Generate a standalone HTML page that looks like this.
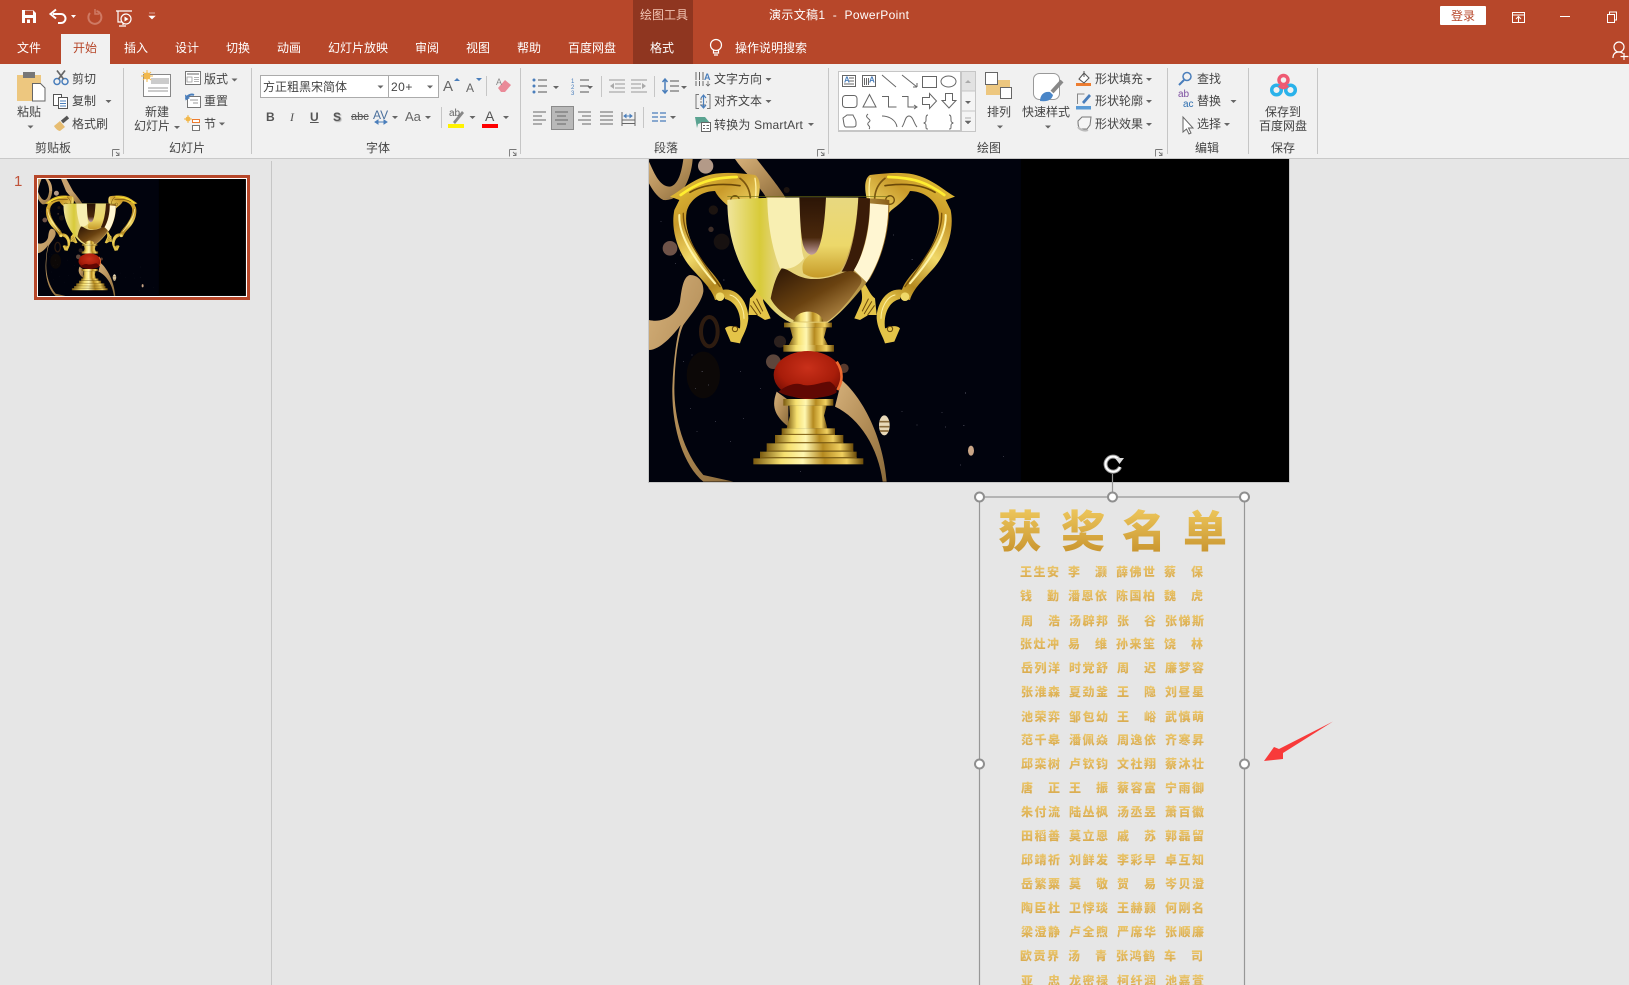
<!DOCTYPE html>
<html lang="zh-CN"><head><meta charset="utf-8"><title>演示文稿1 - PowerPoint</title>
<style>
html,body{margin:0;padding:0;width:1629px;height:985px;overflow:hidden;background:#e6e6e6}
body{position:relative;font-family:"Liberation Sans","Noto Sans CJK SC",sans-serif}
.b{position:absolute}
.t{position:absolute;white-space:nowrap;font-size:12px;line-height:16px;color:#444}
.w{color:#fff}
.g{font-family:"Noto Sans CJK SC",sans-serif;font-weight:900;position:absolute;line-height:50px;font-size:44px;top:503px;color:transparent;background:linear-gradient(#f2cd62,#c9952f);-webkit-background-clip:text;background-clip:text}
.r{position:absolute;left:1021px;width:220px;height:16px;font-family:"Noto Sans CJK SC",sans-serif;font-weight:700;font-size:12px;line-height:16px;white-space:nowrap}
.r.s{left:1020px}
.r b{display:inline-block;width:39px;margin-right:9px;text-align:justify;text-align-last:justify;color:transparent;background:linear-gradient(#eecb70,#d6a548);-webkit-background-clip:text;background-clip:text}
</style></head><body>
<div class="b" style="left:0;top:0;width:1629px;height:64px;background:#b7472a"></div>
<div class="b" style="left:633px;top:0;width:60px;height:64px;background:#8f3620"></div>
<div class="b" style="left:61px;top:34px;width:49px;height:30px;background:#f1f1f1"></div>
<div class="b" style="left:0;top:64px;width:1629px;height:94px;background:#f1f1f1;border-bottom:1px solid #c9c9c9"></div>
<div class="b" style="left:271px;top:161px;width:1px;height:824px;background:#c6c6c6"></div>
<div class="b" style="left:1440px;top:6px;width:46px;height:19px;background:#fff;border-radius:1px"></div>
<div class="b" style="left:260px;top:75px;width:127px;height:21px;background:#fff;border:1px solid #ababab"></div>
<div class="b" style="left:388px;top:75px;width:49px;height:21px;background:#fff;border:1px solid #ababab"></div>
<div class="b" style="left:551px;top:106px;width:21px;height:22px;background:#b9b9b9;border:1px solid #8a8a8a"></div>
<div class="b" style="left:838px;top:71px;width:122px;height:59px;background:#fff;border:1px solid #c6c6c6"></div>
<div class="b" style="left:961px;top:71px;width:13px;height:59px;background:#f4f4f4;border:1px solid #c6c6c6"></div>
<div class="b" style="left:962px;top:72px;width:13px;height:19px;background:#e2e2e2"></div>

<svg class="b" style="left:0;top:0" width="1629" height="985" viewBox="0 0 1629 985" xmlns="http://www.w3.org/2000/svg">
<defs>
<linearGradient id="gh" x1="0" x2="1" y1="0" y2="0"><stop offset="0" stop-color="#7a5a10"/><stop offset=".25" stop-color="#f6e070"/><stop offset=".45" stop-color="#fff7b0"/><stop offset=".65" stop-color="#b58a20"/><stop offset=".85" stop-color="#f0d060"/><stop offset="1" stop-color="#6a4a08"/></linearGradient>
<linearGradient id="gs" gradientUnits="userSpaceOnUse" x1="90" y1="60" x2="350" y2="400"><stop offset="0" stop-color="#e8c838"/><stop offset=".3" stop-color="#c99a2a"/><stop offset=".55" stop-color="#f0d868"/><stop offset=".8" stop-color="#b58a20"/><stop offset="1" stop-color="#e4c448"/></linearGradient>
<linearGradient id="rb" x1="0" x2="1" y1="0" y2="1"><stop offset="0" stop-color="#d5b07a"/><stop offset=".5" stop-color="#b38e58"/><stop offset="1" stop-color="#8a6a3a"/></linearGradient>
<linearGradient id="cup" x1="0" x2="1" y1="0" y2="0"><stop offset="0" stop-color="#f0e59c"/><stop offset=".2" stop-color="#d8cb3a"/><stop offset=".3" stop-color="#e4d478"/><stop offset=".6" stop-color="#e8d27a"/><stop offset="1" stop-color="#8a5e18"/></linearGradient>
<linearGradient id="dk" x1="0" x2="0" y1="0" y2="1"><stop offset="0" stop-color="#2c1506"/><stop offset=".7" stop-color="#4a280c"/><stop offset="1" stop-color="#c39ea0"/></linearGradient>
<linearGradient id="bot" x1="0" x2="1" y1="0" y2="1"><stop offset="0" stop-color="#2a1405"/><stop offset=".5" stop-color="#6a4210"/><stop offset="1" stop-color="#cda35a"/></linearGradient>
<linearGradient id="ct" x1="0" x2="0" y1="0" y2="1"><stop offset="0" stop-color="#e8d880"/><stop offset=".6" stop-color="#ecd86a"/><stop offset="1" stop-color="#c69a28"/></linearGradient>
<radialGradient id="ball" cx=".5" cy=".35" r=".7"><stop offset="0" stop-color="#c9301a"/><stop offset=".6" stop-color="#a81d0a"/><stop offset="1" stop-color="#6a0a02"/></radialGradient>
<clipPath id="sc"><rect x="27" y="-99" width="1920" height="1080"/></clipPath>
<clipPath id="mc"><rect x="649" y="159" width="640" height="323"/></clipPath>
<g id="hd">
<path d="M90 125C125 105 160 70 215 58C260 50 300 55 345 60C362 70 362 100 355 130C350 165 340 195 332 218L312 218C305 195 295 180 280 165C260 150 235 130 225 108C190 108 150 130 140 170C130 230 165 290 205 340C230 370 255 395 252 430L225 435C215 400 185 375 150 335C110 285 92 220 103 165L118 135Z" fill="url(#gs)"/>
<path d="M245 405C290 395 325 440 325 490C322 525 305 545 300 565L272 560L255 520C270 505 295 520 300 520C305 480 290 440 255 432Z" fill="url(#gs)"/>
<path d="M330 430C345 420 350 400 372 368L380 375C370 400 365 430 372 445L392 490L375 495L350 480L325 480Z" fill="url(#gs)"/>
<g fill="none" stroke-linecap="round">
<path d="M118 180C115 240 160 310 225 385" stroke="#fff4a8" stroke-width="6"/>
<path d="M130 175C128 240 172 300 240 395" stroke="#7a5208" stroke-width="4"/>
<path d="M122 120C170 85 210 68 290 66" stroke="#ffee30" stroke-width="8"/>
<path d="M150 112C190 88 240 84 300 92" stroke="#6a4808" stroke-width="5"/>
<path d="M300 70C340 100 335 150 322 195" stroke="#7a5610" stroke-width="5"/>
<path d="M345 70C352 110 345 150 335 185" stroke="#fff0a0" stroke-width="4"/>
<circle cx="285" cy="135" r="13" stroke="#6e4c0c" stroke-width="4"/>
<path d="M340 440l22 36M350 432l18 36M332 452l20 28" stroke="#6e4c0c" stroke-width="3"/>
<path d="M270 420C295 425 312 460 312 490" stroke="#fff0a0" stroke-width="3"/>
<circle cx="285" cy="522" r="8" stroke="#6e4c0c" stroke-width="3"/>
</g>
<circle cx="322" cy="210" r="8" fill="#fff0a8"/>
<circle cx="240" cy="425" r="13" fill="#f0d868"/>
</g>
<g id="slide"><g clip-path="url(#sc)">
<rect x="27" y="-99" width="1920" height="1080" fill="#000"/>
<rect x="27" y="-99" width="1116" height="1080" fill="#01030d"/>
<circle cx="197" cy="33" r="23" fill="#b39a88"/><circle cx="90" cy="280" r="22" fill="#6f5348"/><circle cx="213" cy="223" r="8" fill="#3e2e28"/><circle cx="214" cy="397" r="9" fill="#5e4538"/><circle cx="400" cy="620" r="22" fill="#5c463c"/><circle cx="612" cy="640" r="14" fill="#57392c"/><circle cx="420" cy="560" r="18" fill="#2c211e"/><circle cx="245" cy="260" r="24" fill="#171110"/><circle cx="220" cy="165" r="14" fill="#1c1410"/><circle cx="440" cy="105" r="9" fill="#1c1410"/>
<ellipse cx="208" cy="530" rx="25" ry="44" fill="none" stroke="#2e1c10" stroke-width="12"/>
<ellipse cx="190" cy="660" rx="50" ry="70" fill="#0c0807"/>
<path d="M27 20C45 60 60 95 90 95C115 90 125 50 130 12L158 12C155 60 130 140 70 135C50 125 35 100 27 85Z" fill="url(#rb)"/>
<path d="M130 12L158 12C160 -30 150 -70 120 -99L95 -99C120 -60 130 -20 130 12ZM27 -99L60 -99C45 -60 30 -20 27 20Z" fill="#c9a26e"/>
<path d="M285 12L350 12C380 50 420 100 438 130L380 130C350 80 310 50 285 12Z" fill="url(#rb)"/>
<path d="M240 -99L290 -99L350 12L285 12Z" fill="#c9a26e"/>
<path d="M27 495C70 505 110 480 120 440C125 400 130 365 150 360C175 360 192 380 190 410C185 440 160 470 130 510C115 540 105 610 103 700C103 790 130 890 190 960L280 980L190 980C130 930 95 820 97 700C100 620 110 540 122 510C100 540 60 585 27 585Z" fill="url(#rb)"/>
<path d="M605 675C670 730 730 850 740 980L728 980C715 880 660 790 585 755Z" fill="url(#rb)"/>
<path d="M410 710C395 750 400 780 445 815L445 735Z" fill="url(#rb)"/>
<ellipse cx="733" cy="811" rx="16" ry="30" fill="#e8d9b8"/><path d="M718 800h30M718 815h30M720 828h26" stroke="#8a6c3c" stroke-width="5"/>
<ellipse cx="993" cy="887" rx="9" ry="15" fill="#c9a586"/>
<path d="M120 300h2M105 325h2M62 200h2M80 130h2M185 650h3M250 375h3M165 700h2M300 650h2M205 690h2M150 760h2M170 830h2M225 800h2M270 860h2M310 790h2M975 714h3M905 772h2M970 812h3M915 816h2M1090 905h2M960 930h2M815 313h3M760 240h2M785 770h2M830 810h2M430 920h2M480 950h2M360 700h2M130 620h2M155 600h2" stroke="#778" stroke-width="2"/>
<use href="#hd"/>
<use href="#hd" transform="translate(1035 0) scale(-1 1)"/>
<path d="M262 135C262 260 300 360 385 450C410 480 440 500 460 505L560 505C600 480 650 420 690 370C730 300 750 220 748 135C700 125 320 125 262 135Z" fill="url(#cup)"/>
<path d="M382 128L480 128C482 200 480 280 492 310C470 340 440 345 420 340C395 280 382 200 382 128Z" fill="#f8efb2"/>
<path d="M555 128L655 128C650 220 630 300 600 350C560 370 520 375 490 355C480 320 500 300 530 290C550 260 555 180 555 128Z" fill="url(#ct)"/>
<path d="M478 128L558 128C555 180 550 260 530 290C515 310 495 295 488 265C480 220 480 170 478 128Z" fill="url(#dk)"/>
<path d="M655 128L690 130C690 220 670 300 640 350L605 350C635 300 650 220 655 128Z" fill="#3a1c08"/>
<path d="M690 145L745 150C745 240 720 320 680 382L642 345C670 300 690 230 690 145Z" fill="#fff6d2"/>
<path d="M425 340C450 340 470 375 530 372C590 370 620 340 640 350C665 365 670 375 660 390C620 450 580 490 560 500L470 500C430 480 400 450 392 430C400 390 410 360 425 340Z" fill="url(#bot)"/>
<path d="M262 125L748 125" stroke="#6a6a10" stroke-width="2"/>
<path d="M432 503h144v14H432z" fill="url(#gh)"/><path d="M460 500c10-40 80-40 90 0z" fill="url(#gh)"/>
<path d="M450 517h110l-8 30 12 24H446l12-24z" fill="url(#gh)"/>
<rect x="430" y="570" width="152" height="20" fill="url(#gh)"/>
<ellipse cx="503" cy="660" rx="102" ry="72" fill="url(#ball)"/>
<path d="M415 710C440 690 470 680 490 690C520 695 545 680 570 680C585 690 590 700 590 712C560 735 450 735 415 710Z" fill="#600803"/>
<path d="M590 620C610 650 608 680 592 705" stroke="#ee6a30" stroke-width="8" fill="none"/>
<rect x="430" y="732" width="150" height="20" fill="url(#gh)"/>
<path d="M448 752h112l-8 30 10 38H440l10-38z" fill="url(#gh)"/>
<rect x="425" y="820" width="160" height="20" fill="url(#gh)"/><rect x="405" y="840" width="205" height="25" fill="url(#gh)"/><rect x="380" y="865" width="260" height="25" fill="url(#gh)"/><rect x="360" y="890" width="290" height="20" fill="url(#gh)"/><rect x="340" y="910" width="330" height="18" fill="url(#gh)"/>
<path d="M425 838h160M405 863h205M380 888h260M360 908h290" stroke="#7a5a10" stroke-width="3"/>
</g></g>
</defs>

<!-- slide -->
<rect x="648" y="158" width="642" height="325" fill="#c8c8c8"/>
<g clip-path="url(#mc)"><use href="#slide" transform="translate(640 155) scale(.33333)"/></g>
<!-- thumb -->
<rect x="35.500" y="176.500" width="213" height="122" fill="#fff" stroke="#b7472a" stroke-width="3"/>
<use href="#slide" transform="translate(35.080 189.720) scale(.1083)"/>

<!-- selection -->
<path d="M979.500 985V497H1244.500V985M1112.500 474V497" fill="none" stroke="#979797" stroke-width="1.200"/>
<g fill="#fff" stroke="#8f8f8f" stroke-width="2"><circle cx="979.500" cy="497" r="4.500"/><circle cx="1112.500" cy="497" r="4.500"/><circle cx="1244.500" cy="497" r="4.500"/><circle cx="979.500" cy="764" r="4.500"/><circle cx="1244.500" cy="764" r="4.500"/></g>
<path d="M1118.500 459A7.500 7.500 0 1 0 1120 467" fill="none" stroke="#9a9a9a" stroke-width="4"/>
<path d="M1118.500 459A7.500 7.500 0 1 0 1120 467" fill="none" stroke="#fff" stroke-width="2"/>
<path d="M1116 464h9l-4.500 -6z" fill="#ddd" transform="rotate(180 1120 461)"/>
<polygon points="1333,721.500 1283,753 1283,759 1264,761 1274,747 1279,749" fill="#f83a3a"/>

<!-- QAT -->
<path d="M22 10h11l3 3v10H22z" fill="#fff"/><rect x="25" y="10.500" width="8" height="4.500" fill="#b7472a"/><rect x="25" y="18" width="8" height="5" fill="#b7472a"/><rect x="27" y="19.500" width="3" height="3.500" fill="#fff"/>
<path d="M53 14h8a4.500 4.500 0 0 1 0 9h-3" fill="none" stroke="#fff" stroke-width="2"/><path d="M56 9.500l-5.500 4.500 5.500 4.500" fill="none" stroke="#fff" stroke-width="2"/>
<path d="M71 15h5l-2.500 3z" fill="#fff"/>
<path d="M96.500 11A6.500 6.500 0 1 1 90 13" fill="none" stroke="#cf7a64" stroke-width="2"/><path d="M95 9v5h4" fill="none" stroke="#cf7a64" stroke-width="1.500"/>
<path d="M116 11h16M118 11v11h4M123 22v3M119 26h7" fill="none" stroke="#fff" stroke-width="1.200"/><circle cx="126" cy="19" r="5" fill="#b7472a" stroke="#fff" stroke-width="1.200"/><path d="M124.500 16.500l4 2.500-4 2.500z" fill="#fff"/>
<path d="M149 13h6M149 16h6l-3 3z" fill="#fff" stroke="#fff" stroke-width=".6"/>
<!-- window -->
<path d="M1512.500 12.500h12v10h-12zM1512.500 15h12M1518.500 22v-5M1516 19l2.500-2.500 2.500 2.500" fill="none" stroke="#fff"/>
<path d="M1560 16.500h10" stroke="#fff"/>
<path d="M1607.500 14.500h7v8h-7zM1609.500 14.500v-2.500h7v8h-2" fill="none" stroke="#fff"/>
<circle cx="1619" cy="47" r="5" fill="none" stroke="#fff" stroke-width="1.200"/><path d="M1613 58c0-4 2-6 6-6 2 0 3 .5 4 1.500M1624 53v7M1620.500 56.500h8" fill="none" stroke="#fff" stroke-width="1.200"/>
<circle cx="716" cy="45" r="5.500" fill="none" stroke="#fff" stroke-width="1.200"/><path d="M713.500 50v3h5v-3M714 55h4" fill="none" stroke="#fff" stroke-width="1.200"/>

<!-- separators -->
<path d="M123.500 68v86M251.500 68v86M520.500 68v86M828.500 68v86M1167.500 68v86M1248.500 68v86M1317.500 68v86M486.500 76v20M441.500 107v21M601.500 76v21M654.500 76v21M643.500 107v21" stroke="#c6c6c6"/>

<!-- clipboard group -->
<rect x="17" y="75" width="24" height="26" fill="#edc77f"/><rect x="23" y="72" width="12" height="6" fill="#777"/><path d="M32.500 83.500h8l4.500 4.500v13H32.500z" fill="#fff" stroke="#666"/>
<circle cx="57" cy="81.500" r="3" fill="none" stroke="#4a7ebb" stroke-width="1.500"/><circle cx="65" cy="81.500" r="3" fill="none" stroke="#4a7ebb" stroke-width="1.500"/><path d="M58.500 79L65 70.500M63.500 79L57 70.500" stroke="#666" stroke-width="1.700"/>
<rect x="53.500" y="94.500" width="8" height="11" fill="#fff" stroke="#555"/><rect x="58.500" y="97.500" width="9" height="11" fill="#fff" stroke="#555"/><path d="M60 101h6M60 103.500h6M60 106h6" stroke="#4a7ebb"/>
<path d="M54 126l6-5 5 6-5 4c-2 0-5-3-6-5z" fill="#e7bd72"/><path d="M62 122l6-5" stroke="#555" stroke-width="3.500"/>
<!-- slides group -->
<rect x="143.500" y="74.500" width="27" height="22" fill="#fff" stroke="#888"/><rect x="151" y="78" width="18" height="6" fill="#ccc"/><path d="M148 88h20M148 91h20" stroke="#999"/><circle cx="147" cy="76" r="3.500" fill="#f2b84b"/><path d="M147 70v12M141 76h12M143 72l8 8M151 72l-8 8" stroke="#f2b84b"/>
<rect x="185.500" y="71.500" width="15" height="13" fill="#fff" stroke="#777"/><path d="M187 74h12" stroke="#999" stroke-width="1.500"/><path d="M187 77h5v5h-5zM194 77.500h5M194 79.500h5M194 81.500h5" fill="none" stroke="#999" stroke-width=".8"/>
<rect x="187.500" y="96.500" width="13" height="11" fill="#fff" stroke="#777"/><path d="M190 100h8M193 103h5" stroke="#999"/><path d="M186 99a6 6 0 0 1 8-4" fill="none" stroke="#4a7ebb" stroke-width="2"/><path d="M185 94.500l.5 6 4.500-2.500z" fill="#4a7ebb"/>
<circle cx="188" cy="119" r="2.500" fill="#f2b84b"/><path d="M188 115v8M184 119h8" stroke="#f2b84b"/><path d="M192.500 119.500h7v3h-7z" fill="#fff" stroke="#ed7d31"/><path d="M192.500 125.500h7v5h-7z" fill="#fff" stroke="#777"/>
<!-- font group misc -->
<path d="M454 81l3-3 3 3z M476 78l3 3 3-3z" fill="#4a7ebb"/>
<path d="M498 88l7-8 6 5-6 7h-4z" fill="#ea8a98"/><text x="496" y="85" font-size="9" fill="#888" font-family="Liberation Sans">A</text>
<path d="M375 122h12M375 122l3-2v4zM387 122l-3-2v4z" fill="#4a7ebb" stroke="#4a7ebb"/>
<path d="M453 122l9-11 2 2-9 11z" fill="#888"/><rect x="448" y="124" width="16" height="4" fill="#fff200"/>
<rect x="482" y="124" width="16" height="4" fill="#f00"/>
<!-- para icons -->
<g fill="#4a7ebb"><circle cx="534" cy="80" r="1.500"/><circle cx="534" cy="86" r="1.500"/><circle cx="534" cy="92" r="1.500"/></g>
<path d="M538 80h9M538 86h9M538 92h9M580 80h9M580 86h9M580 92h9" stroke="#555"/>
<path d="M609 80h16M615 84h10M615 88h10M609 92h16M631 80h16M631 84h10M631 88h10M631 92h16" stroke="#999"/><path d="M614 83l-4 3 4 3zM642 83l4 3-4 3z" fill="#aaa"/>
<path d="M665 80v12M662.500 82l2.500-3 2.500 3M662.500 90l2.500 3 2.500-3" fill="none" stroke="#4a7ebb" stroke-width="1.500"/><path d="M670 81h9M670 86h9M670 91h9" stroke="#555"/>
<text x="571" y="83" font-size="6" fill="#4a7ebb" font-family="Liberation Sans">1</text><text x="571" y="89" font-size="6" fill="#4a7ebb" font-family="Liberation Sans">2</text><text x="571" y="95" font-size="6" fill="#4a7ebb" font-family="Liberation Sans">3</text>
<path d="M533 112h13M533 116h9M533 120h13M533 124h9M555 112h13M557 116h9M555 120h13M557 124h9M578 112h13M582 116h9M578 120h13M582 124h9M600 112h13M600 116h13M600 120h13M600 124h13M622 112v14M635 112v14M622.500 120h12M622.500 123.500h12" fill="none" stroke="#666"/>
<path d="M624 116h8M624 116l2-1.500v3zM632 116l-2-1.500v3z" stroke="#4a7ebb" fill="#4a7ebb"/>
<path d="M652 113h6M652 117h6M652 121h6M660 113h6M660 117h6M660 121h6" stroke="#4a7ebb" stroke-width="1.300"/>
<path d="M696 72v14M699.500 72v14M703 72v14" stroke="#666" stroke-dasharray="8 1"/><text x="704" y="80" font-size="9" font-weight="700" fill="#4a7ebb" font-family="Liberation Sans">A</text><path d="M708 81v5M706 84l2 2 2-2" fill="none" stroke="#666" stroke-width=".8"/>
<path d="M699 94.500h-3v14h3M707 94.500h3v14h-3M700 99h2M700 102h2M706 102h1M700 105h6" fill="none" stroke="#777"/><path d="M703.500 95.500v12M701 98l2.500-3 2.500 3M701 105l2.500 3 2.500-3" fill="none" stroke="#4a7ebb" stroke-width="1.200"/>
<path d="M695 117h10l5 6H701l-3 1-1 4z" fill="#5aa391"/><rect x="701.500" y="122.500" width="9" height="9" fill="#fff" stroke="#666"/><path d="M703 125.500h2M706.500 125.500h2.500M703 128.500h2M706.500 128.500h2.500" stroke="#666"/>
<!-- gallery -->
<g fill="none" stroke="#666" stroke-width="1">
<rect x="842.500" y="75.500" width="13" height="11"/><rect x="862.500" y="75.500" width="13" height="11"/>
<path d="M849 78h5M849 81h5M844 84h10M864.500 78v7M866.500 78v7M868.500 78v7"/>
<path d="M882 75l14 12M902 75l15 12M917 87v-4M917 87h-4"/>
<rect x="922.500" y="76.500" width="14" height="11"/><ellipse cx="948.500" cy="81.500" rx="7.500" ry="5.500"/>
<rect x="842.500" y="95.500" width="14.500" height="12" rx="3"/><path d="M869.500 94.500l6.500 12.500h-13zM882 96.500h6.500v10.500h8M902 96.500h6v10.500h8M914 105l3 2-3 2"/>
<path d="M922.500 97.500h7v-4l7 7.500-7 7.500v-4h-7zM945.500 93.500h7v7h3.500l-7 7.500-7-7.500h3.500z"/>
<path d="M843 118l4-3h6c1 3 3 4 3 7v3c0 2-2 2-3 2h-7c-2 0-2-3-3-9zM868 114c-5 4 5 5 1 8s3 4 0 7M882 116c7 0 14 4 15 11M902 127c3-4 3-11 7-11s5 8 8 11M928 115c-2 0-2 2-2 5s-1 2-2 3c1 1 2 0 2 3s0 3 2 3M949 115c2 0 2 2 2 5s1 2 2 3c-1 1-2 0-2 3s0 3-2 3"/>
</g>
<text x="844" y="82.500" font-size="8" font-weight="700" fill="#4a7ebb" font-family="Liberation Sans">A</text><text x="869" y="82.500" font-size="8" font-weight="700" fill="#4a7ebb" font-family="Liberation Sans">A</text>
<rect x="838.500" y="71.500" width="122" height="59" fill="none" stroke="#c6c6c6"/>
<path d="M961 91h14M961 111h14" stroke="#c6c6c6"/>
<path d="M965 83l3-3 3 3z" fill="#aaa"/><path d="M965 101h6l-3 3z" fill="#666"/><path d="M965 118h6M965 121h6l-3 3z" fill="#666" stroke="#666" stroke-width=".5"/>
<!-- arrange -->
<rect x="986" y="80" width="24" height="15" fill="#edc77f"/><rect x="985.500" y="72.500" width="12" height="12" fill="#fff" stroke="#666"/><rect x="1000.500" y="87.500" width="11" height="11" fill="#fff" stroke="#666"/>
<!-- quick styles -->
<rect x="1033.500" y="73.500" width="26" height="26" rx="6" fill="#fff" stroke="#999"/><path d="M1062 81l-10 11" stroke="#888" stroke-width="4"/><path d="M1040 101c0-6 4-10 10-9l3 3c-1 4-4 7-13 6z" fill="#4a86c8"/>
<!-- shape fmt -->
<rect x="1076" y="83" width="15" height="3" fill="#ed7d31"/><path d="M1079 79l5-6 5 5-5 5z" fill="#fff" stroke="#555"/><path d="M1084 71v6" stroke="#555"/>
<rect x="1076" y="106" width="15" height="3.500" fill="#5b9bd5"/><path d="M1077.500 104v-10h7" fill="none" stroke="#888"/><path d="M1082 102l7-8 2 2-7 8z" fill="#4a7ebb"/>
<path d="M1078 121l4-4h9l-1 8-3 4h-7c-2-2-2-5-2-8z" fill="#f6f6f6" stroke="#777"/><path d="M1078 127c3 4 8 4 10 3" stroke="#bbb" stroke-width="2" fill="none"/>
<!-- launchers -->
<g fill="none" stroke="#777" stroke-width=".9"><path d="M112.500 149.500h7M112.500 149.500v7M116 152l3 3M119 152.500v3h-3"/><path d="M509.500 149.500h7M509.500 149.500v7M513 152l3 3M516 152.500v3h-3"/><path d="M817.500 149.500h7M817.500 149.500v7M821 152l3 3M824 152.500v3h-3"/><path d="M1155.500 149.500h7M1155.500 149.500v7M1159 152l3 3M1162 152.500v3h-3"/></g>
<!-- edit -->
<circle cx="1187" cy="76.500" r="4" fill="none" stroke="#4a7ebb" stroke-width="1.500"/><path d="M1184 80l-5 5" stroke="#4a7ebb" stroke-width="2"/>
<path d="M1183 117v15l3.500-3 2.500 5 2-1-2.500-5h4.500z" fill="#fff" stroke="#666"/>
<!-- baidu -->
<g fill="none" stroke-width="3.500"><circle cx="1283.500" cy="80" r="4.500" stroke="#ef5a72"/><circle cx="1276.500" cy="90" r="4.800" stroke="#2ab2ea"/><circle cx="1290.500" cy="90" r="4.800" stroke="#2ab2ea"/></g><path d="M1279 85.500c3 3 6 3 9 0" fill="none" stroke="#ef5a72" stroke-width="3"/>
<!-- dropdown arrows -->
<path fill="#666" d="M27.500 125.500h6l-3 3zM105.500 100h6l-3 3zM174 126h6l-3 3zM231.500 78.500h6l-3 3zM219 122.500h6l-3 3zM377.500 85.500h6l-3 3zM427 85.500h6l-3 3zM392 116h6l-3 3zM425 116h6l-3 3zM469.500 116h6l-3 3zM503 116h6l-3 3zM553 86h6l-3 3zM587 86h6l-3 3zM681 86h6l-3 3zM670 116h6l-3 3zM765.500 78h6l-3 3zM765.500 100h6l-3 3zM808 123h6l-3 3zM997 125.500h6l-3 3zM1045 125.500h6l-3 3zM1146 78h6l-3 3zM1146 100h6l-3 3zM1146 123h6l-3 3zM1230.500 100h6l-3 3zM1224 123h6l-3 3z"/>
</svg>

<!-- title bar text -->
<div class="t" style="left:640px;top:7px;color:#f2c5b5">绘图工具</div>
<div class="t w" style="left:769px;top:7px;letter-spacing:.35px">演示文稿1&nbsp; -&nbsp; PowerPoint</div>
<div class="t" style="left:1451px;top:8px;color:#b7472a">登录</div>
<!-- tabs -->
<div class="t w" style="left:17px;top:40px">文件</div>
<div class="t" style="left:73px;top:40px;color:#b7472a">开始</div>
<div class="t w" style="left:124px;top:40px">插入</div>
<div class="t w" style="left:175px;top:40px">设计</div>
<div class="t w" style="left:226px;top:40px">切换</div>
<div class="t w" style="left:277px;top:40px">动画</div>
<div class="t w" style="left:328px;top:40px">幻灯片放映</div>
<div class="t w" style="left:415px;top:40px">审阅</div>
<div class="t w" style="left:466px;top:40px">视图</div>
<div class="t w" style="left:517px;top:40px">帮助</div>
<div class="t w" style="left:568px;top:40px">百度网盘</div>
<div class="t w" style="left:650px;top:40px">格式</div>
<div class="t w" style="left:735px;top:40px">操作说明搜索</div>
<!-- ribbon text -->
<div class="t" style="left:17px;top:104px">粘贴</div>
<div class="t" style="left:72px;top:71px">剪切</div>
<div class="t" style="left:72px;top:93px">复制</div>
<div class="t" style="left:72px;top:116px">格式刷</div>
<div class="t" style="left:145px;top:104px">新建</div>
<div class="t" style="left:134px;top:118px">幻灯片</div>
<div class="t" style="left:204px;top:71px">版式</div>
<div class="t" style="left:204px;top:93px">重置</div>
<div class="t" style="left:204px;top:116px">节</div>
<div class="t" style="left:263px;top:79px">方正粗黑宋简体</div>
<div class="t" style="left:391px;top:79px;letter-spacing:.5px">20+</div>
<div class="t" style="left:443px;top:79px;font-size:15px;color:#666">A</div>
<div class="t" style="left:466px;top:80px;font-size:12px;color:#666">A</div>
<div class="t" style="left:266px;top:109px;font-weight:700;color:#555">B</div>
<div class="t" style="left:290px;top:109px;font-style:italic;font-family:'Liberation Serif',serif;color:#555">I</div>
<div class="t" style="left:310px;top:109px;font-weight:700;text-decoration:underline;color:#555">U</div>
<div class="t" style="left:333px;top:109px;font-weight:700;color:#555;text-shadow:1px 1px 1px #aaa">S</div>
<div class="t" style="left:351px;top:109px;font-size:11px;text-decoration:line-through;color:#555">abc</div>
<div class="t" style="left:373px;top:107px;font-size:12px;color:#4a6f9c">AV</div>
<div class="t" style="left:405px;top:109px;font-size:13px;color:#666">Aa</div>
<div class="t" style="left:449px;top:106px;font-size:10px;color:#666">ab</div>
<div class="t" style="left:485px;top:108px;font-size:14px;color:#555">A</div>
<div class="t" style="left:714px;top:71px">文字方向</div>
<div class="t" style="left:714px;top:93px">对齐文本</div>
<div class="t" style="left:714px;top:117px;letter-spacing:.2px">转换为 SmartArt</div>
<div class="t" style="left:987px;top:104px">排列</div>
<div class="t" style="left:1022px;top:104px">快速样式</div>
<div class="t" style="left:1095px;top:71px">形状填充</div>
<div class="t" style="left:1095px;top:93px">形状轮廓</div>
<div class="t" style="left:1095px;top:116px">形状效果</div>
<div class="t" style="left:1197px;top:71px">查找</div>
<div class="t" style="left:1197px;top:93px">替换</div>
<div class="t" style="left:1197px;top:116px">选择</div>
<div class="t" style="left:1178px;top:90px;font-size:10px;line-height:10px;color:#7d4fa0">ab</div>
<div class="t" style="left:1183px;top:100px;font-size:10px;line-height:10px;color:#2f6fb0">ac</div>
<div class="t" style="left:1265px;top:104px">保存到</div>
<div class="t" style="left:1259px;top:118px">百度网盘</div>
<div class="t" style="left:35px;top:140px">剪贴板</div>
<div class="t" style="left:169px;top:140px">幻灯片</div>
<div class="t" style="left:366px;top:140px">字体</div>
<div class="t" style="left:654px;top:140px">段落</div>
<div class="t" style="left:977px;top:140px">绘图</div>
<div class="t" style="left:1195px;top:140px">编辑</div>
<div class="t" style="left:1271px;top:140px">保存</div>
<div class="t" style="left:14px;top:173px;font-size:15px;line-height:18px;color:#c0533a">1</div>

<!-- gold heading -->
<div class="g" style="left:998px">获</div>
<div class="g" style="left:1061px">奖</div>
<div class="g" style="left:1122px">名</div>
<div class="g" style="left:1183px">单</div>

<div class="r s" style="top:564px"><b>王生安</b><b>李灏</b><b>薛佛世</b><b>蔡保</b></div>
<div class="r s" style="top:588px"><b>钱勤</b><b>潘恩依</b><b>陈国柏</b><b>魏虎</b></div>
<div class="r" style="top:613px"><b>周浩</b><b>汤辟邦</b><b>张谷</b><b>张悌斯</b></div>
<div class="r s" style="top:636px"><b>张灶冲</b><b>易维</b><b>孙来笙</b><b>饶林</b></div>
<div class="r" style="top:660px"><b>岳列洋</b><b>时党舒</b><b>周迟</b><b>廉梦容</b></div>
<div class="r" style="top:684px"><b>张淮森</b><b>夏劲釜</b><b>王隐</b><b>刘昼星</b></div>
<div class="r" style="top:709px"><b>池荣弈</b><b>邹包幼</b><b>王峪</b><b>武慎萌</b></div>
<div class="r" style="top:732px"><b>范千皋</b><b>潘佩焱</b><b>周逸依</b><b>齐寒昇</b></div>
<div class="r" style="top:756px"><b>邱栾树</b><b>卢钦钧</b><b>文社翔</b><b>蔡沐壮</b></div>
<div class="r" style="top:780px"><b>唐正</b><b>王振</b><b>蔡容富</b><b>宁雨御</b></div>
<div class="r" style="top:804px"><b>朱付流</b><b>陆丛枫</b><b>汤丞昱</b><b>萧百徽</b></div>
<div class="r" style="top:828px"><b>田稻善</b><b>莫立恩</b><b>戚苏</b><b>郭磊留</b></div>
<div class="r" style="top:852px"><b>邱靖祈</b><b>刘鲜发</b><b>李彩早</b><b>卓互知</b></div>
<div class="r" style="top:876px"><b>岳繁粟</b><b>莫敬</b><b>贺易</b><b>岑贝澄</b></div>
<div class="r" style="top:900px"><b>陶臣杜</b><b>卫悖琰</b><b>王赫颢</b><b>何刚名</b></div>
<div class="r" style="top:924px"><b>梁澄静</b><b>卢全煦</b><b>严席华</b><b>张顺廉</b></div>
<div class="r s" style="top:948px"><b>欧贡界</b><b>汤青</b><b>张鸿鹤</b><b>车司</b></div>
<div class="r" style="top:973px"><b>亚忠</b><b>龙密禄</b><b>柯纤润</b><b>池嘉萱</b></div>
</body></html>
